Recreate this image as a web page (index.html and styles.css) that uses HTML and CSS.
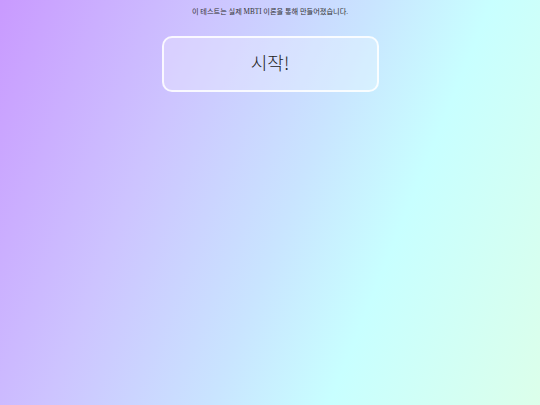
FILE: index.html
```html
<!DOCTYPE html>
<html lang="ko">
  <head>
    <meta charset="utf-8" />
    <title>MBTI 테스트</title>
    <link rel="stylesheet" href="styles.css">
  </head>

  <body>
    <div id="container">
      <p class="intro">이 테스트는 실제 MBTI 이론을 통해 만들어졌습니다.</p>
      <button id="startBtn" class="start">시작!</button>
    </div>
  </body>
</html>
```

FILE: styles.css
```css
html,
body {
  height: 100%;
}

body {
  margin: 0;
  font-family: "Liberation Serif", "Noto Sans CJK KR", serif;
  background: linear-gradient(
    112deg,
    #c99aff 0%,
    #cdc4ff 30%,
    #c9e4ff 53%,
    #c8ffff 70%,
    #dcffea 100%
  );
}

#container {
  display: flex;
  flex-direction: column;
  align-items: center;
}

.intro {
  margin: 7px 0 0 0;
  font-size: 7.2px;
  line-height: 10px;
  color: #333;
}

.start {
  margin-top: 19px;
  width: 217px;
  height: 56px;
  padding: 0 0 4px 0;
  border: 2px solid rgba(255, 255, 255, 0.85);
  border-radius: 10px;
  background-color: rgba(255, 255, 255, 0.25);
  font-family: "Noto Sans CJK KR", sans-serif;
  font-size: 18px;
  font-weight: 300;
  color: #222;
  cursor: pointer;
}
```
